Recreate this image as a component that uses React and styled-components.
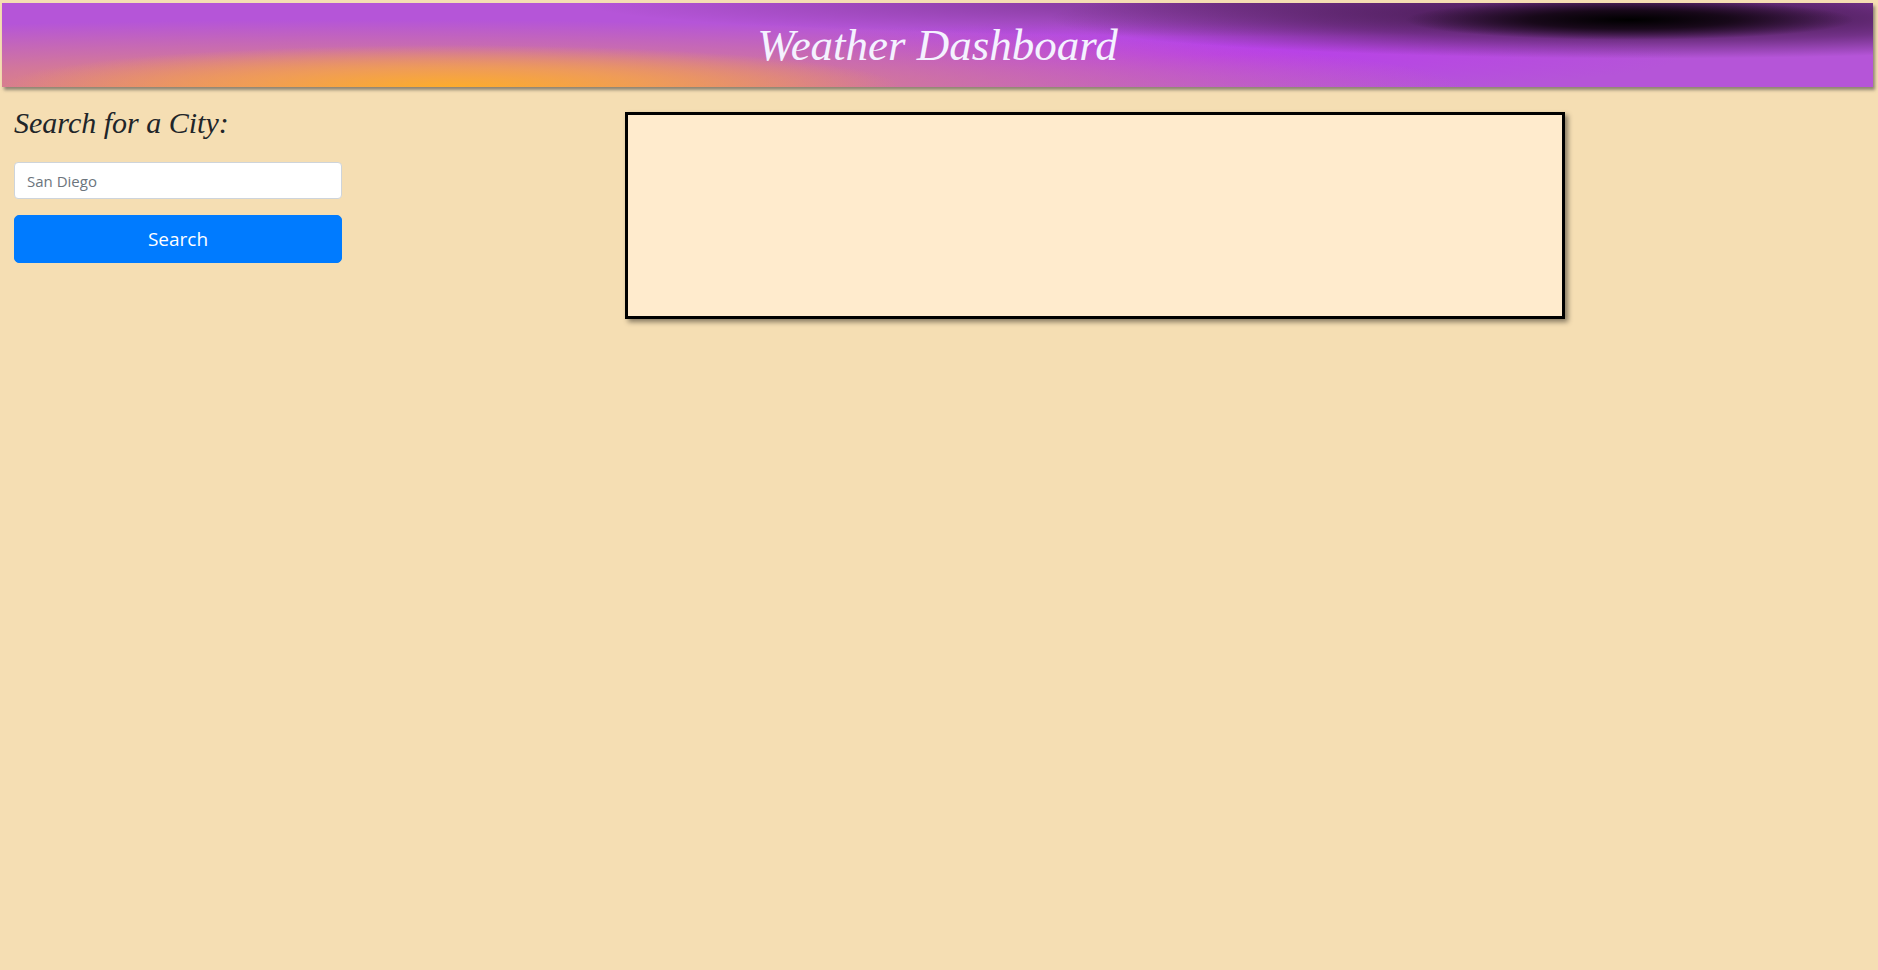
import React from "react";
import styled, { createGlobalStyle } from "styled-components";

const GlobalStyle = createGlobalStyle`
  html, body {
    margin: 0;
    padding: 0;
    background: #f5deb3;
  }
  body {
    font-family: "Open Sans", "Noto Sans", Arial, sans-serif;
    min-height: 970px;
  }
  * { box-sizing: border-box; }
`;

const Page = styled.div`
  padding-top: 3px;
  min-height: 970px;
  background: #f5deb3;
`;

const Banner = styled.header`
  margin: 0 5px 0 2px;
  height: 84px;
  display: flex;
  align-items: center;
  justify-content: center;
  box-shadow: 2px 3px 3px rgba(60, 60, 60, 0.55);
  background:
    radial-gradient(ellipse 12% 24% at 87% 20%, rgba(0,0,0,1) 0%, rgba(15,5,15,0.85) 45%, rgba(40,10,50,0) 100%),
    radial-gradient(ellipse 32% 48% at 88% 18%, rgba(35,8,40,0.85) 0%, rgba(60,20,70,0.55) 55%, rgba(60,20,70,0) 100%),
    radial-gradient(ellipse 35% 40% at 66% 0%, rgba(80,30,90,0.55) 0%, rgba(80,30,90,0) 100%),
    radial-gradient(ellipse 24% 50% at 24% 100%, rgba(252,172,45,1) 0%, rgba(242,160,80,0.85) 45%, rgba(225,135,120,0) 100%),
    radial-gradient(ellipse 58% 80% at 20% 100%, rgba(238,150,95,0.95) 0%, rgba(215,125,145,0.65) 55%, rgba(210,120,150,0) 100%),
    radial-gradient(ellipse 25% 45% at 65% 62%, rgba(185,60,235,0.9) 0%, rgba(185,60,235,0) 100%),
    #b555d8;
`;

const Title = styled.h1`
  margin: 0;
  font-family: "Liberation Serif", "Times New Roman", serif;
  font-style: italic;
  font-weight: 400;
  font-size: 45px;
  line-height: 1;
  color: #f4f2ff;
`;

const Main = styled.main`
  display: grid;
  grid-template-columns: 328px 940px;
  column-gap: 283px;
  padding-left: 14px;
`;

const Sidebar = styled.section`
  display: flex;
  flex-direction: column;
  padding-top: 18px;
`;

const SearchHeading = styled.h2`
  margin: 0 0 21px;
  font-family: "Liberation Serif", "Times New Roman", serif;
  font-style: italic;
  font-weight: 400;
  font-size: 30px;
  line-height: 36px;
  color: #212529;
`;

const CityInput = styled.input`
  display: block;
  width: 100%;
  height: 37px;
  padding: 6px 12px;
  font-family: "Open Sans", "Noto Sans", Arial, sans-serif;
  font-size: 15px;
  color: #495057;
  background: #fff;
  border: 1px solid #ced4da;
  border-radius: 4px;
  outline: none;
  &::placeholder { color: #6c757d; }
`;

const SearchButton = styled.button`
  margin-top: 16px;
  width: 100%;
  height: 48px;
  border: 1px solid #007bff;
  border-radius: 5px;
  background: #007bff;
  color: #fff;
  font-family: "Open Sans", "Noto Sans", Arial, sans-serif;
  font-size: 19px;
  cursor: pointer;
`;

const ForecastPanel = styled.section`
  margin-top: 25px;
  height: 207px;
  background: #ffebcd;
  border: 3px solid #000;
  box-shadow: 3px 3px 5px rgba(0, 0, 0, 0.45);
`;

export default function App() {
  return (
    <>
      <GlobalStyle />
      <Page>
        <Banner>
          <Title>Weather Dashboard</Title>
        </Banner>
        <Main>
          <Sidebar>
            <SearchHeading>Search for a City:</SearchHeading>
            <CityInput type="text" placeholder="San Diego" />
            <SearchButton type="button">Search</SearchButton>
          </Sidebar>
          <ForecastPanel />
        </Main>
      </Page>
    </>
  );
}
